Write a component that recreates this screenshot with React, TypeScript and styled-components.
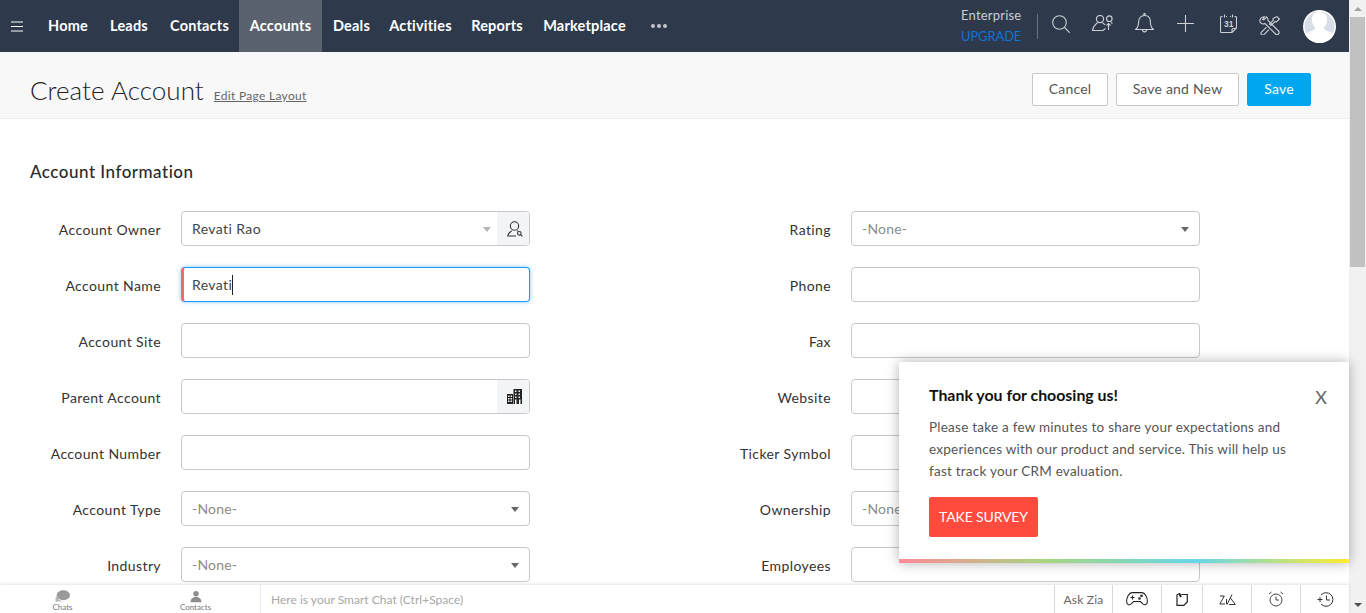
import React from "react";
import styled, { createGlobalStyle } from "styled-components";

const Global = createGlobalStyle`
  html, body { margin: 0; padding: 0; height: 100%; overflow: hidden; background: #fff; }
  body { font-family: Lato, "Open Sans", "Liberation Sans", sans-serif; color: #222; }
  #root { height: 613px; }
  * { box-sizing: border-box; }
`;

const Page = styled.div`
  position: relative;
  display: flex;
  width: 1366px;
  height: 613px;
  overflow: hidden;
`;
const Main = styled.div`
  width: 1349px;
  height: 613px;
  display: flex;
  flex-direction: column;
`;
const Scrollbar = styled.div`
  width: 17px;
  background: #f1f1f1;
  display: flex;
  flex-direction: column;
  align-items: center;
`;
const ScrollArrow = styled.div<{ $up?: boolean }>`
  height: 17px;
  width: 17px;
  display: flex;
  align-items: center;
  justify-content: center;
  &::before {
    content: "";
    border-left: 4px solid transparent;
    border-right: 4px solid transparent;
    ${(p) => (p.$up ? "border-bottom: 4px solid #a3a3a3;" : "border-top: 4px solid #505050;")}
  }
`;
const ScrollThumb = styled.div`
  width: 15px;
  height: 250px;
  background: #c1c1c1;
`;
const ScrollTrack = styled.div`
  flex: 1;
  display: flex;
  justify-content: center;
`;

const Nav = styled.nav`
  height: 52px;
  flex: none;
  background: #2e3a4c;
  display: flex;
  align-items: stretch;
  color: #fff;
`;
const Burger = styled.div`
  width: 38px;
  display: flex;
  align-items: center;
  padding-left: 11px;
`;
const NavList = styled.div`
  display: flex;
`;
const NavItem = styled.div<{ $active?: boolean; $w: number }>`
  width: ${(p) => p.$w}px;
  padding-bottom: 2px;
  display: flex;
  align-items: center;
  justify-content: center;
  font-size: 14.5px;
  font-weight: 700;
  letter-spacing: 0.2px;
  background: ${(p) => (p.$active ? "#5a6270" : "transparent")};
`;
const Dots = styled.div`
  margin-left: 16px;
  display: flex;
  align-items: center;
  gap: 2px;
`;
const Dot = styled.span`
  width: 4px;
  height: 4px;
  border-radius: 50%;
  background: #c3c7cd;
`;
const NavRight = styled.div`
  margin-left: auto;
  display: flex;
  align-items: center;
  padding-right: 13px;
`;
const Plan = styled.div`
  width: 76px;
  height: 52px;
  display: flex;
  flex-direction: column;
  justify-content: center;
  font-size: 13px;
  letter-spacing: 0.2px;
  gap: 6px;
  line-height: 15px;
  color: #c9ccd1;
`;
const Upgrade = styled.span`
  color: #0e73d6;
  font-size: 12.8px;
  letter-spacing: 0;
`;
const NavDivider = styled.div`
  width: 1px;
  height: 25px;
  background: #6a7380;
  margin: 0 14px 0 0;
`;
const NavIcon = styled.div<{ $w: number; $top: number }>`
  width: ${(p) => p.$w}px;
  height: 52px;
  padding-top: ${(p) => p.$top}px;
  display: flex;
  align-items: flex-start;
`;
const Avatar = styled.div`
  width: 33px;
  height: 33px;
  border-radius: 50%;
  overflow: hidden;
  display: flex;
`;

const Header = styled.header`
  height: 67px;
  flex: none;
  background: #f8f8f8;
  border-bottom: 1px solid #eeeeee;
  display: flex;
  align-items: center;
  padding: 0 38px 0 30px;
`;
const Title = styled.h1`
  margin: 0;
  font-size: 26px;
  font-weight: 300;
  color: #222;
  letter-spacing: 0.05px;
  line-height: 34px;
  position: relative;
  top: 5px;
`;
const EditLink = styled.a`
  margin-left: 10px;
  font-size: 12px;
  letter-spacing: 0.3px;
  color: #666;
  text-decoration: underline;
  position: relative;
  top: 10px;
`;
const Actions = styled.div`
  margin-left: auto;
  display: flex;
  gap: 8px;
  position: relative;
  top: 4px;
`;
const Button = styled.button<{ $primary?: boolean; $w: number }>`
  width: ${(p) => p.$w}px;
  height: 33px;
  border-radius: 2px;
  font-family: inherit;
  font-size: 14px;
  letter-spacing: 0.2px;
  background: ${(p) => (p.$primary ? "#00a7f0" : "#fff")};
  color: ${(p) => (p.$primary ? "#fff" : "#555")};
  border: 1px solid ${(p) => (p.$primary ? "#00a7f0" : "#c8c8c8")};
  padding: 0 0 2px;
`;

const Content = styled.div`
  flex: 1;
  min-height: 0;
  overflow: hidden;
  padding: 42px 0 0 30px;
`;
const SectionTitle = styled.h2`
  margin: 0 0 28px;
  font-size: 17px;
  line-height: 22px;
  color: #2a2a2a;
  font-weight: 500;
  letter-spacing: 0.5px;
`;
const FormGrid = styled.div`
  display: grid;
  row-gap: 21px;
  grid-template-columns: 500px 500px;
  column-gap: 170px;
`;
const Field = styled.div`
  display: flex;
  align-items: center;
  height: 35px;
`;
const Label = styled.label`
  width: 131px;
  margin-right: 20px;
  text-align: right;
  font-size: 14px;
  color: #333;
  letter-spacing: 0.4px;
  position: relative;
  top: 1px;
`;
const InputBox = styled.div<{ $focus?: boolean }>`
  position: relative;
  width: 349px;
  height: 35px;
  background: #fff;
  border: 1px solid ${(p) => (p.$focus ? "#1a9df0" : "#c8c8cc")};
  border-radius: 4px;
  display: flex;
  align-items: center;
  padding-left: 10px;
  font-size: 14px;
  letter-spacing: 0.4px;
  color: #444;
  overflow: hidden;
  ${(p) =>
    p.$focus
      ? "box-shadow: 0 0 4px rgba(40,160,250,.6); border-left: 3px solid #f46a6a; padding-left: 8px; overflow: visible;"
      : ""}
`;
const Placeholder = styled.span`
  color: #8c8c8c;
  letter-spacing: 0.2px;
`;
const Caret = styled.span`
  display: inline-block;
  width: 1px;
  height: 20px;
  background: #222;
`;
const Arrow = styled.span<{ $light?: boolean; $right: number }>`
  position: absolute;
  right: ${(p) => p.$right}px;
  top: 15px;
  border-left: 4.5px solid transparent;
  border-right: 4.5px solid transparent;
  border-top: 5px solid ${(p) => (p.$light ? "#b5b5b5" : "#666")};
`;
const Addon = styled.span`
  position: absolute;
  right: 0;
  top: 0;
  bottom: 0;
  width: 32px;
  background: #f3f4f5;
  display: flex;
  align-items: center;
  justify-content: center;
  padding-left: 3px;
`;

const Bottom = styled.footer`
  height: 28px;
  flex: none;
  background: #fff;
  display: flex;
  box-shadow: 0 -1px 3px rgba(0, 0, 0, 0.12);
  position: relative;
  z-index: 1;
`;
const TabCell = styled.div<{ $gap?: number }>`
  width: 125px;
  margin-left: ${(p) => p.$gap ?? 0}px;
  display: flex;
  flex-direction: column;
  align-items: center;
  padding-top: 5px;
  font-size: 8px;
  line-height: 9px;
  color: #777;
`;
const ChatInput = styled.div`
  margin-left: 2px;
  flex: 1;
  display: flex;
  align-items: center;
  padding-left: 10px;
  border-left: 1px solid #ececec;
  font-size: 12px;
  color: #a8a8a8;
  letter-spacing: 0.02px;
`;
const BottomCell = styled.div<{ $w: number }>`
  width: ${(p) => p.$w}px;
  border-left: 1px solid #d8d8d8;
  display: flex;
  align-items: center;
  justify-content: center;
  font-size: 12px;
  color: #666;
  letter-spacing: 0.2px;
`;

const Popup = styled.aside`
  position: absolute;
  left: 899px;
  top: 362px;
  width: 450px;
  height: 201px;
  background: #fff;
  box-shadow: 0 0 12px rgba(0, 0, 0, 0.3);
  padding: 24px 30px 0;
  z-index: 2;
  &::after {
    content: "";
    position: absolute;
    left: 0;
    right: 0;
    bottom: 0;
    height: 4px;
    background: linear-gradient(90deg, #ff8a97, #a5d67f 33%, #66d6ea 66%, #ffeb2d);
  }
`;
const PopupTitle = styled.div`
  font-size: 15.9px;
  font-weight: 700;
  line-height: 18px;
  color: #111;
  margin-bottom: 12px;
`;
const PopupText = styled.p`
  margin: 0 0 15px;
  font-size: 13.5px;
  line-height: 22px;
  color: #555;
  width: 370px;
  letter-spacing: 0.24px;
`;
const Survey = styled.button`
  width: 109px;
  height: 40px;
  border: none;
  border-radius: 2px;
  background: #ff4b3e;
  color: #fff;
  font-family: inherit;
  font-size: 14px;
  letter-spacing: -0.15px;
  padding: 0 0 2px;
`;
const Close = styled.span`
  position: absolute;
  right: 22px;
  top: 25px;
  font-size: 18px;
  line-height: 20px;
  color: #666;
`;

const stroke = { fill: "none", stroke: "#ccd0d5", strokeWidth: 1.1 } as const;
const dark = { fill: "none", stroke: "#333", strokeWidth: 1.1 } as const;

const navItems: [string, number][] = [
  ["Home", 60],
  ["Leads", 62],
  ["Contacts", 79],
  ["Accounts", 83],
  ["Deals", 59],
  ["Activities", 79],
  ["Reports", 74],
  ["Marketplace", 101],
];

const left: [string, string][] = [
  ["Account Owner", "owner"],
  ["Account Name", "name"],
  ["Account Site", "text"],
  ["Parent Account", "parent"],
  ["Account Number", "text"],
  ["Account Type", "select"],
  ["Industry", "select"],
];
const right: [string, string][] = [
  ["Rating", "select"],
  ["Phone", "text"],
  ["Fax", "text"],
  ["Website", "text"],
  ["Ticker Symbol", "text"],
  ["Ownership", "select"],
  ["Employees", "text"],
];

function Control({ kind }: { kind: string }) {
  if (kind === "owner")
    return (
      <InputBox>
        Revati Rao
        <Arrow $light $right={38} />
        <Addon>
          <svg width="16" height="16" viewBox="0 0 16 16" {...dark}>
            <circle cx="7.5" cy="5" r="4.2" />
            <path d="M5 9.500c-.3 1.500-4 1.500-4.300 5.500H9M10 9.500c.3.400.8.600 1.300.7" />
            <circle cx="12.300" cy="12.300" r="1.800" />
            <path d="M13.600 13.600l1.800 1.800" />
          </svg>
        </Addon>
      </InputBox>
    );
  if (kind === "name")
    return (
      <InputBox $focus>
        Revati
        <Caret />
      </InputBox>
    );
  if (kind === "parent")
    return (
      <InputBox>
        <Addon>
          <svg width="15" height="15" viewBox="0 0 15 15" fill="#222">
            <path d="M0 5h6v10H0zM6.500 0H15v15H6.500z" />
            <path
              d="M1 6.500h1.500V8H1zM3.500 6.500H5V8H3.500zM1 9h1.500v1.500H1zM3.500 9H5v1.500H3.500zM1 11.500h1.500V13H1zM3.500 11.500H5V13H3.500zM8 1.500h1.500V3H8zM11.500 1.500H13V3h-1.500zM8 4.500h1.500V6H8zM11.500 4.500H13V6h-1.500zM8 7.500h1.500V9H8zM11.500 7.500H13V9h-1.500zM8 10.500h1.500V15H8zM12 10.500h1.500V15H12z"
              fill="#f3f4f5"
            />
          </svg>
        </Addon>
      </InputBox>
    );
  if (kind === "select")
    return (
      <InputBox>
        <Placeholder>-None-</Placeholder>
        <Arrow $right={10} />
      </InputBox>
    );
  return <InputBox />;
}

export default function App() {
  return (
    <Page>
      <Global />
      <Main>
        <Nav>
          <Burger>
            <svg width="13" height="11" viewBox="0 0 13 11" stroke="#fff" strokeWidth="1">
              <path d="M0 1h12M0 5.500h12M0 10h12" />
            </svg>
          </Burger>
          <NavList>
            {navItems.map(([n, w]) => (
              <NavItem key={n} $w={w} $active={n === "Accounts"}>
                {n}
              </NavItem>
            ))}
          </NavList>
          <Dots>
            <Dot />
            <Dot />
            <Dot />
          </Dots>
          <NavRight>
            <Plan>
              <span>Enterprise</span>
              <Upgrade>UPGRADE</Upgrade>
            </Plan>
            <NavDivider />
            <NavIcon $w={40} $top={15}>
              <svg width="18" height="18" viewBox="0 0 18 18" {...stroke}>
                <circle cx="7.500" cy="7.500" r="6.800" />
                <path d="M12.500 12.500l5.200 5.200" />
              </svg>
            </NavIcon>
            <NavIcon $w={43} $top={15}>
              <svg width="21" height="16" viewBox="0 0 21 16" {...stroke}>
                <circle cx="8" cy="4" r="3.600" />
                <path d="M5.500 7.500C5 9 1 10 .6 15.500H11l2.500-2M10.500 7.500c.4 1 1.500 1.600 2.700 2.200" />
                <circle cx="17.300" cy="3.700" r="2.800" />
                <path d="M16.500 15V8.500M14.500 10.500l2-2 2 2M19 7.500c.6.300 1 .6 1.400 1" />
              </svg>
            </NavIcon>
            <NavIcon $w={42} $top={13}>
              <svg width="19" height="20" viewBox="0 0 19 20" {...stroke}>
                <path d="M.6 16.500c2.400-2 3-3.500 3-7.500 0-4 2.400-6.500 5.900-6.500s5.900 2.500 5.900 6.500c0 4 .6 5.500 3 7.500z" />
                <path d="M7.500 17c0 2.500 4 2.500 4 0" />
                <circle cx="9.500" cy="1.300" r=".8" />
              </svg>
            </NavIcon>
            <NavIcon $w={43} $top={15}>
              <svg width="17" height="17" viewBox="0 0 17 17" {...stroke}>
                <path d="M8.500 0v17M0 8.500h17" />
              </svg>
            </NavIcon>
            <NavIcon $w={39} $top={14}>
              <svg width="17" height="19" viewBox="0 0 17 19" {...stroke}>
                <path d="M2.500 2.500H1.500a1 1 0 0 0-1 1v14a1 1 0 0 0 1 1H12l4.500-4.500V3.500a1 1 0 0 0-1-1h-1M6 2.500h1M10 2.500h1M4.500.5v3M12.500.5v3M12 18.500v-3a1 1 0 0 1 1-1h3.500" />
                <text x="4" y="13" fontSize="8.500" fontWeight="700" fill="#ccd0d5" stroke="none" fontFamily="Liberation Sans">
                  31
                </text>
              </svg>
            </NavIcon>
            <NavIcon $w={44} $top={16}>
              <svg width="21" height="19" viewBox="0 0 21 19" {...stroke}>
                <path d="M5.500.8A4.200 4.200 0 0 0 1 6a4 4 0 0 0 5 1.500l10.500 10.500a1.800 1.800 0 0 0 3-3L9 4.500A4 4 0 0 0 7.500 1L4.800 3.800 3.600 3.400z" />
                <path d="M18 .6l2.400 2.400-2.900 3-1.600-.4-3.900 3.900-1.500-1.500 3.900-3.900-.4-1.600zM7.500 11.200l-5 5a1.600 1.600 0 0 0 2.400 2.400l5-5" />
              </svg>
            </NavIcon>
            <Avatar>
              <svg width="33" height="33" viewBox="0 0 33 33">
                <rect width="33" height="33" fill="#fff" />
                <circle cx="16.500" cy="16.500" r="15" fill="#d8dee7" />
                <path d="M2 24c5-3 9-3 10.500-6-3-3-4-6.500-3.500-10.500C9.500 4 12.500 2 16.500 2s7 2 7.500 5.500c.5 4-.5 7.500-3.500 10.500 1.500 3 5.500 3 10.500 6v9H2z" fill="#fff" />
              </svg>
            </Avatar>
          </NavRight>
        </Nav>
        <Header>
          <Title>Create Account</Title>
          <EditLink>Edit Page Layout</EditLink>
          <Actions>
            <Button $w={76}>Cancel</Button>
            <Button $w={123}>Save and New</Button>
            <Button $primary $w={64}>
              Save
            </Button>
          </Actions>
        </Header>
        <Content>
          <SectionTitle>Account Information</SectionTitle>
          <FormGrid>
            {left.map((l, i) => (
              <React.Fragment key={l[0]}>
                <Field>
                  <Label>{l[0]}</Label>
                  <Control kind={l[1]} />
                </Field>
                <Field>
                  <Label>{right[i][0]}</Label>
                  <Control kind={right[i][1]} />
                </Field>
              </React.Fragment>
            ))}
          </FormGrid>
        </Content>
        <Bottom>
          <TabCell>
            <svg width="15" height="13" viewBox="0 0 18 15" fill="#9a9a9a">
              <ellipse cx="10" cy="6" rx="8" ry="6" />
              <path d="M3 7c-2 1-3 3-2 5 0 1-1 2-1 2 2 0 3 0 4-1 2 1 4 1 5 0-4 0-6-3-6-6z" fill="#b5b5b5" />
            </svg>
            Chats
          </TabCell>
          <TabCell $gap={8}>
            <svg width="14" height="13" viewBox="0 0 18 15" fill="#8d8d8d">
              <circle cx="9" cy="4" r="3.500" />
              <path d="M2 15c0-5 3-7 7-7s7 2 7 7z" />
            </svg>
            Contacts
          </TabCell>
          <ChatInput>Here is your Smart Chat (Ctrl+Space)</ChatInput>
          <BottomCell $w={58}>Ask Zia</BottomCell>
          <BottomCell $w={49}>
            <svg width="22" height="14" viewBox="0 0 22 14" fill="none" stroke="#222" strokeWidth="1.100">
              <path d="M6 .6h10c3 0 5.400 5 5.400 9 0 3.400-3.400 4.400-5.400 1.400l-1.500-1.500h-7L6 11c-2 3-5.400 2-5.400-1.400C.6 5.600 3 .6 6 .6z" />
              <path d="M4.500 5.500h4M6.500 3.500v4" />
              <circle cx="15.500" cy="3.800" r=".8" />
              <circle cx="13.500" cy="6.500" r=".8" />
            </svg>
          </BottomCell>
          <BottomCell $w={41}>
            <svg width="12" height="13" viewBox="0 0 12 13" fill="none" stroke="#222" strokeWidth="1.200">
              <path d="M1 1.500h1.500M5.500 1.500h5.800V9l-3.500 3.400H1V1.500" />
              <path d="M3 0l2 4" strokeWidth="2" />
            </svg>
          </BottomCell>
          <BottomCell $w={49}>
            <svg width="17" height="11" viewBox="0 0 17 11" fill="none" stroke="#333" strokeWidth="1">
              <path d="M.8 2h4.500L.8 10H6M7.500 10V5M13 .5L8 10.500M11.500 4l4.800 6.500H10" />
            </svg>
          </BottomCell>
          <BottomCell $w={49}>
            <svg width="16" height="16" viewBox="0 0 16 16" fill="none" stroke="#444" strokeWidth="1">
              <circle cx="8" cy="9" r="6" />
              <path d="M8 5.500V9h3M1 3l2.500-2M15 3l-2.500-2" />
            </svg>
          </BottomCell>
          <BottomCell $w={49}>
            <svg width="17" height="15" viewBox="0 0 17 15" fill="none" stroke="#333" strokeWidth="1">
              <path d="M4 3a6.800 6.800 0 1 1 0 9" />
              <path d="M9.500 3.500V8h3.500M.5 7.500h5M3 5v5" />
            </svg>
          </BottomCell>
        </Bottom>
      </Main>
      <Scrollbar>
        <ScrollArrow $up />
        <ScrollTrack>
          <ScrollThumb />
        </ScrollTrack>
        <ScrollArrow />
      </Scrollbar>
      <Popup>
        <PopupTitle>Thank you for choosing us!</PopupTitle>
        <PopupText>
          Please take a few minutes to share your expectations and experiences with our product and service. This will help us fast
          track your CRM evaluation.
        </PopupText>
        <Survey>TAKE SURVEY</Survey>
        <Close>X</Close>
      </Popup>
    </Page>
  );
}
